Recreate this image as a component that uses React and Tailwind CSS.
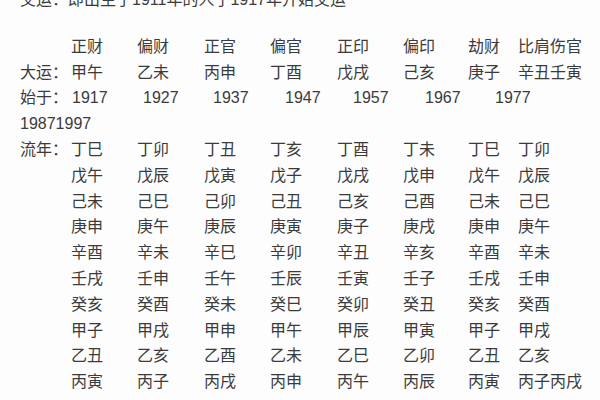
const heads = ['正财', '偏财', '正官', '偏官', '正印', '偏印', '劫财', '比肩伤官']
const dayun = ['甲午', '乙未', '丙申', '丁酉', '戊戌', '己亥', '庚子', '辛丑壬寅']
const years = [
  ['1917', 'w-[71px]'],
  ['1927', 'w-[70px]'],
  ['1937', 'w-[72px]'],
  ['1947', 'w-[68px]'],
  ['1957', 'w-[72px]'],
  ['1967', 'w-[70px]'],
  ['1977', 'w-[70px]'],
]
const liunian = [
  ['丁巳', '丁卯', '丁丑', '丁亥', '丁酉', '丁未', '丁巳', '丁卯'],
  ['戊午', '戊辰', '戊寅', '戊子', '戊戌', '戊申', '戊午', '戊辰'],
  ['己未', '己巳', '己卯', '己丑', '己亥', '己酉', '己未', '己巳'],
  ['庚申', '庚午', '庚辰', '庚寅', '庚子', '庚戌', '庚申', '庚午'],
  ['辛酉', '辛未', '辛巳', '辛卯', '辛丑', '辛亥', '辛酉', '辛未'],
  ['壬戌', '壬申', '壬午', '壬辰', '壬寅', '壬子', '壬戌', '壬申'],
  ['癸亥', '癸酉', '癸未', '癸巳', '癸卯', '癸丑', '癸亥', '癸酉'],
  ['甲子', '甲戌', '甲申', '甲午', '甲辰', '甲寅', '甲子', '甲戌'],
  ['乙丑', '乙亥', '乙酉', '乙未', '乙巳', '乙卯', '乙丑', '乙亥'],
  ['丙寅', '丙子', '丙戌', '丙申', '丙午', '丙辰', '丙寅', '丙子丙戌'],
]

function Row({ label = '', cells }) {
  return (
    <div className="grid grid-cols-[51px_66px_67px_66px_67px_66px_65px_50px_auto]">
      <span className="whitespace-nowrap">{label}</span>
      {cells.map((c, i) => (
        <span key={i} className="whitespace-nowrap">{c}</span>
      ))}
    </div>
  )
}

export default function App() {
  return (
    <div
      className="w-[600px] h-[400px] overflow-hidden bg-[#fdfdfd] text-[#3b3b3b] text-[16px] leading-[25.8px] pl-[20px]"
      style={{ fontFamily: '"Liberation Sans", "Noto Sans CJK SC", sans-serif' }}
    >
      <div className="-mt-[13px] mb-[21px] whitespace-nowrap">交运：即出生于1911年的人于1917年开始交运</div>

      <Row cells={heads} />
      <Row label="大运：" cells={dayun} />
      <div className="flex">
        <span className="w-[52px] whitespace-nowrap">始于：</span>
        {years.map(([y, w]) => (
          <span key={y} className={w}>{y}</span>
        ))}
      </div>
      <div>19871997</div>
      {liunian.map((r, i) => (
        <Row key={i} label={i === 0 ? '流年：' : ''} cells={r} />
      ))}
    </div>
  )
}
